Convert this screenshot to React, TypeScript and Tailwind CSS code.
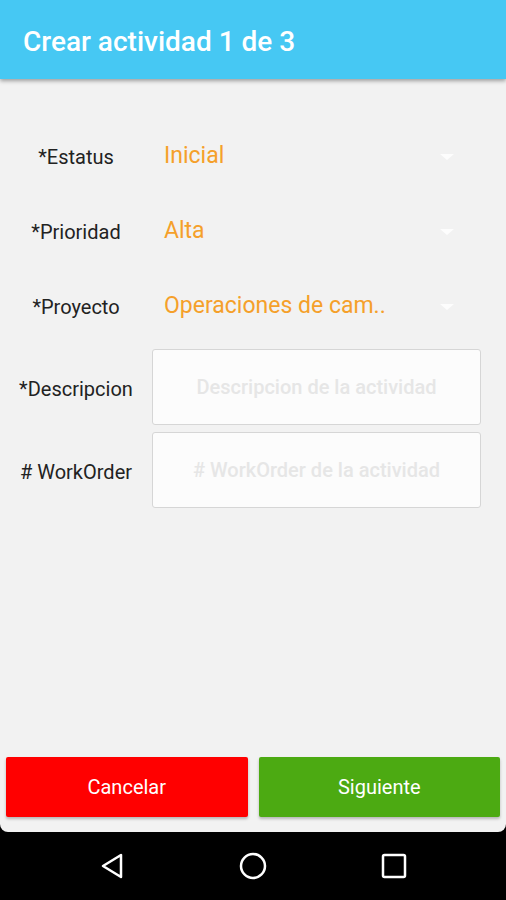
const font = { fontFamily: 'Roboto, "Noto Sans", sans-serif' }

function Caret() {
  return (
    <svg width="14" height="6" viewBox="0 0 14 6" className="shrink-0">
      <path d="M0 0 L14 0 L7 6 Z" fill="#fdfdfd" />
    </svg>
  )
}

function SelectRow({ label, value }: { label: string; value: string }) {
  return (
    <div className="flex h-[75px] items-center">
      <div className="w-[152px] text-center text-[20px] text-[#222]">{label}</div>
      <div className="flex flex-1 items-center pl-3 pr-[52px]">
        <span className="flex-1 text-[23px] text-[#f5a02a]">{value}</span>
        <Caret />
      </div>
    </div>
  )
}

function InputRow({ label, placeholder, className }: { label: string; placeholder: string; className?: string }) {
  return (
    <div className={`flex items-center ${className ?? ''}`}>
      <div className="w-[152px] pt-[3px] text-center text-[20px] text-[#222]">{label}</div>
      <div className="mr-[25px] flex h-[76px] flex-1 items-center justify-center rounded-[3px] border border-[#d6d6d6] bg-[#fcfcfc] text-[20px] font-medium text-[#e6e6e6]">
        {placeholder}
      </div>
    </div>
  )
}

export default function App() {
  return (
    <div className="flex h-[900px] w-[506px] flex-col bg-black" style={font}>
      <header className="relative z-10 flex h-[79px] shrink-0 items-center bg-[#46c8f3] px-[23px] pt-1 shadow-[0_2px_4px_rgba(0,0,0,0.35)]">
        <h1 className="text-[28px] font-medium text-white">Crear actividad 1 de 3</h1>
      </header>

      <main className="flex flex-1 flex-col rounded-b-lg bg-[#f2f2f2] pt-[40px] pb-[15px]">
        <SelectRow label="*Estatus" value="Inicial" />
        <SelectRow label="*Prioridad" value="Alta" />
        <SelectRow label="*Proyecto" value="Operaciones de cam.." />
        <InputRow className="mt-[5px]" label="*Descripcion" placeholder="Descripcion de la actividad" />
        <InputRow className="mt-[7px]" label="# WorkOrder" placeholder="# WorkOrder de la actividad" />

        <div className="mt-auto flex gap-[11px] px-[6px]">
          <button className="h-[60px] flex-1 rounded-[2px] bg-[#ff0000] text-[20px] text-white shadow-[0_2px_3px_rgba(0,0,0,0.25)]">
            Cancelar
          </button>
          <button className="h-[60px] flex-1 rounded-[2px] bg-[#4caa12] text-[20px] text-white shadow-[0_2px_3px_rgba(0,0,0,0.25)]">
            Siguiente
          </button>
        </div>
      </main>

      <nav className="flex h-[68px] shrink-0 items-center justify-center gap-[114px]">
        <svg width="26" height="28" viewBox="0 0 26 28">
          <path d="M22 3 L22 25 L4 14 Z" fill="none" stroke="white" strokeWidth="2.5" strokeLinejoin="round" />
        </svg>
        <svg width="28" height="28" viewBox="0 0 28 28">
          <circle cx="14" cy="14" r="12" fill="none" stroke="white" strokeWidth="2.5" />
        </svg>
        <svg width="26" height="26" viewBox="0 0 26 26">
          <rect x="2" y="2" width="22" height="22" rx="1.5" fill="none" stroke="white" strokeWidth="2.5" />
        </svg>
      </nav>
    </div>
  )
}
